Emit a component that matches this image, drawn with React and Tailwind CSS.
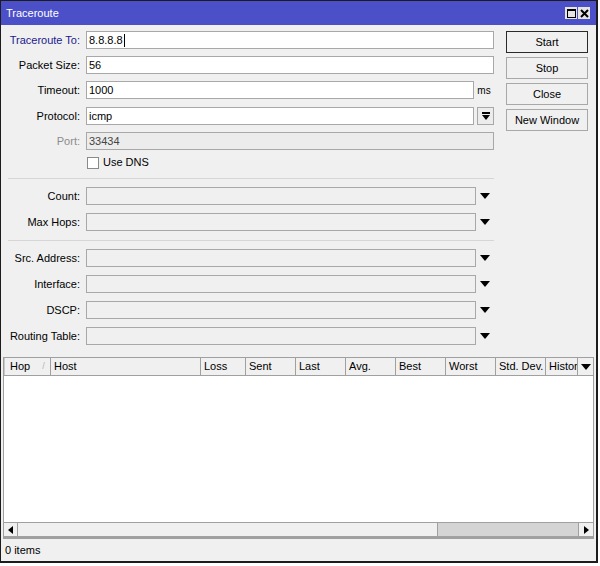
import React from 'react';

const Arrow = () => (
  <svg width="10" height="6" viewBox="0 0 10 6"><polygon points="0,0 10,0 5,6" fill="#000" /></svg>
);

const Label = ({ children, className = '' }) => (
  <div className={`w-[85px] pr-[6px] text-right whitespace-nowrap ${className}`}>{children}</div>
);

const Field = ({ label, value, labelClass, inputClass = 'bg-white', width = 'w-[408px]', mt, after }) => (
  <div className={`flex items-center h-[18px] ${mt}`}>
    <Label className={labelClass}>{label}</Label>
    <div className={`h-[18px] ${width} border border-[#a8a8a8] flex items-center px-[2px] ${inputClass}`}>{value}</div>
    {after}
  </div>
);

const ComboRow = ({ label, mt }) => (
  <div className={`flex items-center h-[18px] ${mt}`}>
    <Label>{label}</Label>
    <div className="h-[18px] w-[390px] border border-[#a8a8a8] bg-[#f0f0f0]" />
    <div className="w-[18px] flex justify-center"><Arrow /></div>
  </div>
);

const Btn = ({ children, dark }) => (
  <div className={`h-[22px] w-[82px] flex items-center justify-center bg-[#f0f0f0] border ${dark ? 'border-[#2a2a2a]' : 'border-[#a8a8a8]'}`}>
    {children}
  </div>
);

const columns = [
  ['Hop', 47],
  ['Host', 150],
  ['Loss', 45],
  ['Sent', 50],
  ['Last', 50],
  ['Avg.', 50],
  ['Best', 50],
  ['Worst', 50],
  ['Std. Dev.', 50],
  ['History', 32],
];

export default function App() {
  return (
    <div className="w-[600px] h-[566px] bg-white font-['Liberation_Sans',Arial,sans-serif] text-[11px] text-black">
      <div className="w-[598px] h-[563px] bg-[#f0f0f0] border-l border-t border-r-2 border-b-2 border-[#1c1c1c] flex flex-col">
        {/* title bar */}
        <div className="h-[24px] shrink-0 bg-[#4c50c8] flex items-center justify-between pl-[5px] pr-[6px] text-white text-[11px]">
          <span>Traceroute</span>
          <div className="flex gap-[1px]">
            <div className="w-[12px] h-[12px] bg-[#e4e4e4] flex items-center justify-center">
              <div className="w-[9px] h-[9px] border border-black border-t-2" />
            </div>
            <div className="w-[12px] h-[12px] bg-[#e4e4e4] flex items-center justify-center">
              <svg width="9" height="9" viewBox="0 0 9 9"><path d="M1 1 L8 8 M8 1 L1 8" stroke="#000" strokeWidth="2" /></svg>
            </div>
          </div>
        </div>

        {/* form */}
        <div className="flex pt-[6px] shrink-0">
          <div className="w-[493px] flex flex-col">
            <Field
              label="Traceroute To:"
              labelClass="text-[#1a1a8c]"
              value={<span className="flex items-center">8.8.8.8<span className="w-px h-[13px] bg-black ml-[1px]" /></span>}
            />
            <Field label="Packet Size:" value="56" mt="mt-[7px]" />
            <Field
              label="Timeout:"
              value="1000"
              width="w-[388px]"
              mt="mt-[7px]"
              after={<div className="w-[20px] text-center text-[10px]">ms</div>}
            />
            <Field
              label="Protocol:"
              value="icmp"
              width="w-[388px]"
              mt="mt-[8px]"
              after={
                <div className="ml-[3px] w-[17px] h-[18px] border border-[#a8a8a8] bg-[#ececec] flex items-center justify-center">
                  <svg width="8" height="9" viewBox="0 0 8 9">
                    <rect x="0" y="0" width="8" height="2" fill="#000" />
                    <polygon points="0,3 8,3 4,8" fill="#000" />
                  </svg>
                </div>
              }
            />
            <Field
              label="Port:"
              labelClass="text-[#8c8c8c]"
              value="33434"
              inputClass="bg-[#ececec] text-[#444]"
              mt="mt-[7px]"
            />
            <div className="flex items-center h-[13px] mt-[6px]">
              <div className="w-[86px]" />
              <div className="w-[12px] h-[12px] border border-[#8a8a8a] bg-white" />
              <span className="ml-[4px]">Use DNS</span>
            </div>
            <div className="ml-[7px] mt-[9px] h-px bg-[#d6d6d6]" />
            <ComboRow label="Count:" mt="mt-[8px]" />
            <ComboRow label="Max Hops:" mt="mt-[8px]" />
            <div className="ml-[7px] mt-[9px] h-px bg-[#d6d6d6]" />
            <ComboRow label="Src. Address:" mt="mt-[8px]" />
            <ComboRow label="Interface:" mt="mt-[8px]" />
            <ComboRow label="DSCP:" mt="mt-[8px]" />
            <ComboRow label="Routing Table:" mt="mt-[8px]" />
          </div>
          <div className="ml-[12px] flex flex-col gap-[4px]">
            <Btn dark>Start</Btn>
            <Btn>Stop</Btn>
            <Btn>Close</Btn>
            <Btn>New Window</Btn>
          </div>
        </div>

        {/* table */}
        <div className="mt-[12px] mx-[2px] flex-1 flex flex-col border border-[#a0a0a0]">
          <div className="h-[18px] shrink-0 flex bg-[#f0f0f0] border-b border-[#a0a0a0]">
            {columns.map(([name, w], i) => (
              <div
                key={name}
                style={{ width: w }}
                className={`shrink-0 flex items-center border-r border-[#a0a0a0] overflow-hidden whitespace-nowrap ${i === 0 ? 'pl-[5px] border-l border-l-[#c8c8c8]' : 'pl-[3px]'}`}
              >
                {name}
                {i === 0 && <span className="ml-[12px] text-[#b4b4b4] text-[9px]">/</span>}
              </div>
            ))}
            <div className="flex-1 flex items-center justify-center"><Arrow /></div>
          </div>
          <div className="flex-1 bg-white" />
          <div className="h-[16px] shrink-0 flex border-t border-[#a0a0a0] border-b-2 border-b-[#a0a0a0] bg-[#f0f0f0]">
            <div className="w-[14px] flex items-center justify-center border-r border-[#a0a0a0]">
              <svg width="5" height="8" viewBox="0 0 5 8"><polygon points="5,0 5,8 0,4" fill="#000" /></svg>
            </div>
            <div className="flex-1" />
            <div className="w-[141px] bg-[#d4d4d4] border-l border-[#a0a0a0]" />
            <div className="w-[15px] flex items-center justify-center border-l border-[#a0a0a0]">
              <svg width="5" height="8" viewBox="0 0 5 8"><polygon points="0,0 0,8 5,4" fill="#000" /></svg>
            </div>
          </div>
        </div>

        {/* status bar */}
        <div className="h-[22px] shrink-0 flex items-center pl-[4px]">0 items</div>
      </div>
    </div>
  );
}
